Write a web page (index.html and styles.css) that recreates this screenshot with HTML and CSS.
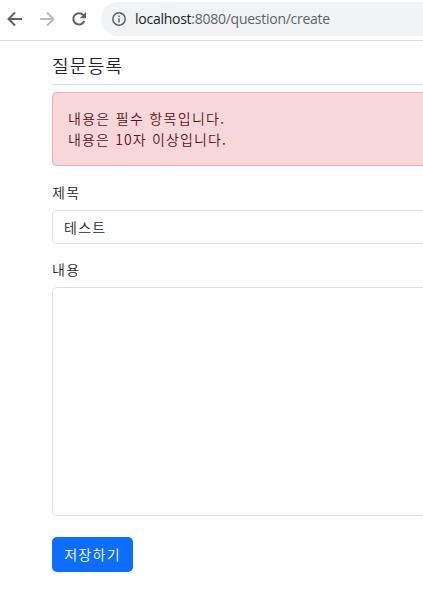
FILE: index.html
```html
<!DOCTYPE html>
<html lang="ko">
<head>
<meta charset="utf-8">
<title>질문등록</title>
<link rel="stylesheet" href="styles.css">
</head>
<body>
<header class="toolbar">
  <svg class="nav" viewBox="0 0 16 16"><path d="M15 8H2M8 1.5 1.5 8 8 14.500"/></svg>
  <svg class="nav nav-disabled" viewBox="0 0 16 16"><path d="M1 8h13M8 1.500 14.500 8 8 14.500"/></svg>
  <svg class="nav" viewBox="0 0 16 16"><path d="M13.300 10A5.700 5.700 0 1 1 12.400 4.200L13.500 5.500"/><path class="fill" d="M15 1v6.200H8.800z"/></svg>
  <div class="address">
    <svg class="info" viewBox="0 0 14 14"><circle cx="7" cy="7" r="6.200"/><path d="M7 6.200v4.300M7 3.400v1.600"/></svg>
    <span class="url"><span class="host">localhost</span>:8080/question/create</span>
  </div>
</header>
<main class="container">
  <h5 class="title">질문등록</h5>
  <form>
    <div class="alert">
      <div>내용은 필수 항목입니다.</div>
      <div class="length-error">내용은 10자 이상입니다.</div>
    </div>
    <label class="label" for="subject">제목</label>
    <input class="control" id="subject" type="text" value="테스트">
    <label class="label" for="content">내용</label>
    <textarea class="control area" id="content"></textarea>
    <button class="save" type="button">저장하기</button>
  </form>
</main>
</body>
</html>
```
FILE: styles.css
```css
* { box-sizing: border-box; }
body {
  margin: 0;
  background: #fff;
  color: #212529;
  font: 350 14px/21px "Noto Sans CJK KR", sans-serif;
  letter-spacing: 1.3px;
}
.toolbar {
  display: flex;
  align-items: center;
  height: 41px;
  padding: 0 0 3px 7px;
  border-bottom: 1px solid #dadce0;
}
.nav {
  flex: none;
  width: 16px;
  height: 16px;
  margin-right: 16px;
  fill: none;
  stroke: #5f6368;
  stroke-width: 2;
}
.nav-disabled { stroke: #babcbe; }
.nav .fill { fill: #5f6368; stroke: none; }
.address {
  display: flex;
  align-items: center;
  flex: 1;
  height: 34px;
  margin-left: -2px;
  padding-left: 11px;
  border-radius: 17px 0 0 17px;
  background: #f1f3f4;
}
.info {
  width: 14px;
  height: 14px;
  margin-right: 9px;
  fill: none;
  stroke: #5f6368;
  stroke-width: 1.5;
}
.url {
  font: 14px/20px "Open Sans", "Noto Sans", sans-serif;
  letter-spacing: -0.26px;
  color: #5f6368;
}
.host { color: #202124; }
.container { padding-left: 52px; }
.title {
  height: 44px;
  margin: 0 0 7px;
  padding-top: 13px;
  border-bottom: 1px solid #dee2e6;
  font-size: 18px;
  line-height: 22px;
  font-weight: 350;
}
.alert {
  height: 74px;
  margin-bottom: 16px;
  padding: 15px;
  border: 1px solid #f1aeb5;
  border-right: 0;
  border-radius: 5px 0 0 5px;
  background: #f8d7da;
  color: #58151c;
}
.length-error { letter-spacing: 1.15px; }
.label { display: block; height: 21px; margin-bottom: 7px; line-height: 20px; }
.control {
  display: block;
  width: 100%;
  height: 34px;
  margin-bottom: 15px;
  padding: 0 11px;
  border: 1px solid #dee2e6;
  border-right: 0;
  border-radius: 5px 0 0 5px;
  background: #fff;
  color: #212529;
  font: inherit;
  letter-spacing: inherit;
}
.area { height: 229px; margin-bottom: 21px; resize: none; }
.save {
  display: block;
  width: 81px;
  height: 35px;
  padding: 0;
  border: 0;
  border-radius: 5px;
  background: #0d6efd;
  color: #fff;
  font: inherit;
  letter-spacing: inherit;
}
```
